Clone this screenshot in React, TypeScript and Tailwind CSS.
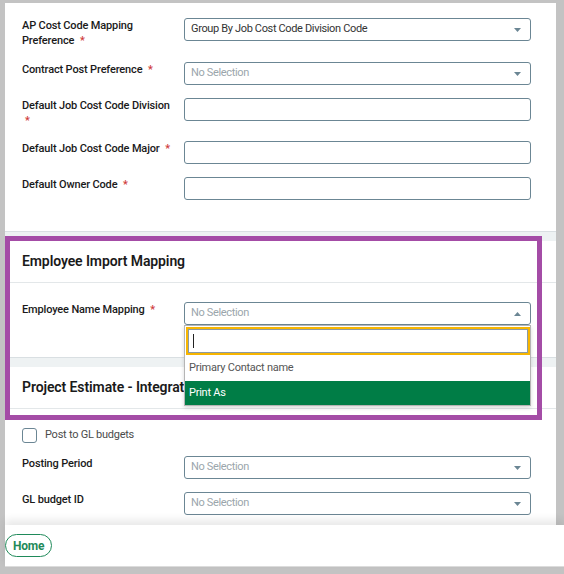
import React from 'react';

const Chevron = ({ up = false }: { up?: boolean }) => (
  <svg width="7" height="4" viewBox="0 0 7 4" className="shrink-0">
    <path d={up ? 'M0 4 L3.5 0 L7 4 Z' : 'M0 0 L7 0 L3.5 4 Z'} fill="#6b8694" />
  </svg>
);

const Select = ({ value, up }: { value?: string; up?: boolean }) => (
  <div className="flex h-[23px] flex-1 items-center justify-between rounded-[3px] border border-[#6b8694] bg-white pl-[6px] pr-[9px] text-[11px] tracking-[-0.35px]">
    <span className={value ? 'text-[#333]' : 'text-[#9ba6ac]'}>{value ?? 'No Selection'}</span>
    <Chevron up={up} />
  </div>
);

const TextInput = () => <div className="h-[23px] flex-1 rounded-[3px] border border-[#6b8694] bg-white" />;

const Field = ({ label, required, children, className = '' }: { label: string; required?: boolean; children: React.ReactNode; className?: string }) => (
  <div className={`flex items-start ${className}`}>
    <div className="w-[162px] shrink-0 pr-[12px] text-[11px] font-medium leading-[15px] tracking-[-0.15px] text-[#1a1a1a]">
      {label}
      {required && (
        <>
          {' '}
          <span className="ml-[3px] text-[#cf3a3a]">*</span>
        </>
      )}
    </div>
    {children}
  </div>
);

const Band = () => <div className="h-[10px] border-t border-[#d9dfe2] bg-[#eef2f3]" />;

const SectionHeader = ({ title }: { title: string }) => (
  <div className="flex h-[42px] items-center border-b border-[#e3e7e9] px-[17px] text-[14px] font-semibold tracking-[-0.1px] text-[#1a1a1a]">
    {title}
  </div>
);

export default function App() {
  return (
    <div className="relative flex h-[574px] w-[564px] flex-col bg-[#c3c3c3] pb-[7px] pl-[5px] pt-[3px] font-[Roboto,_'Liberation_Sans',_sans-serif]">
      <div className="flex h-[522px] shrink-0 overflow-hidden">
        <div className="w-[551px] bg-white">
          {/* general settings */}
          <div className="flex flex-col gap-[13px] pb-[31px] pl-[17px] pr-[25px] pt-[15px]">
            <Field label="AP Cost Code Mapping Preference" required className="mb-[1px]">
              <Select value="Group By Job Cost Code Division Code" />
            </Field>
            <Field label="Contract Post Preference" required>
              <Select />
            </Field>
            <Field label="Default Job Cost Code Division" required>
              <TextInput />
            </Field>
            <Field label="Default Job Cost Code Major" required>
              <TextInput />
            </Field>
            <Field label="Default Owner Code" required>
              <TextInput />
            </Field>
          </div>

          <Band />

          {/* employee import */}
          <div className="relative z-20 bg-white">
            <SectionHeader title="Employee Import Mapping" />
            <div className="pb-[32px] pl-[17px] pr-[25px] pt-[19px]">
              <Field label="Employee Name Mapping" required>
                <div className="relative flex flex-1">
                  <Select up />
                  <div className="absolute left-0 right-0 top-full border border-[#b5b5b5] bg-white text-[11px] tracking-[-0.25px] shadow-[0_2px_4px_rgba(0,0,0,0.15)]">
                    <div className="m-[1px] mr-0 flex h-[28px] items-center border-2 border-[#f7b500] pl-[5px] shadow-[inset_0_0_0_1px_#8c9aa2]">
                      <span className="h-[14px] w-[1px] bg-[#222]" />
                    </div>
                    <div className="flex h-[25px] items-center pl-[4px] text-[#555]">Primary Contact name</div>
                    <div className="flex h-[24px] items-center bg-[#007d46] pl-[4px] text-white">Print As</div>
                  </div>
                </div>
              </Field>
            </div>
          </div>

          <Band />

          {/* project estimate */}
          <div className="bg-white">
            <SectionHeader title="Project Estimate - Integration" />
            <div className="flex flex-col gap-[13px] pl-[17px] pr-[25px] pt-[19px]">
              <label className="flex h-[15px] items-center gap-[8px] text-[11px] tracking-[-0.25px] text-[#4b4b4b]">
                <span className="h-[15px] w-[15px] rounded-[3px] border border-[#6b8694] bg-white" />
                Post to GL budgets
              </label>
              <Field label="Posting Period">
                <Select />
              </Field>
              <Field label="GL budget ID">
                <Select />
              </Field>
            </div>
          </div>
        </div>
      </div>

      <div className="relative z-30 h-[42px] border-b border-[#dcdcdc] bg-white pt-[9px] shadow-[0_-5px_8px_rgba(0,0,0,0.09)]">
        <button className="flex h-[23px] items-center rounded-full border border-[#1f8a5a] px-[7px] text-[12px] font-bold tracking-[-0.2px] text-[#1f8a5a]">
          Home
        </button>
      </div>

      {/* highlight box */}
      <div className="pointer-events-none absolute left-[5px] top-[236px] z-40 h-[184px] w-[537px] border-[5px] border-[#a44ca6]" />
    </div>
  );
}
